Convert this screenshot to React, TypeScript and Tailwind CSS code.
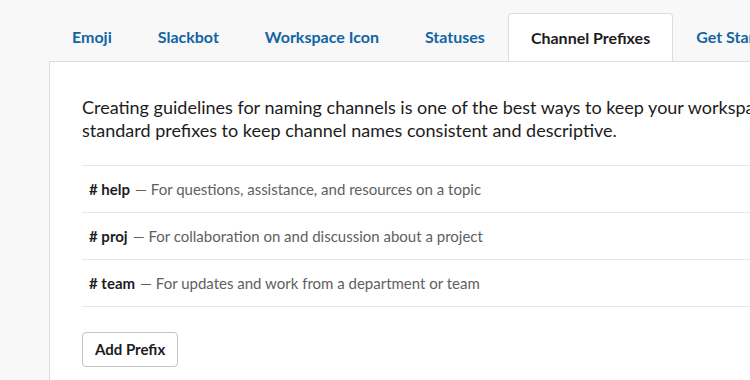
const tabs = ["Emoji", "Slackbot", "Workspace Icon", "Statuses", "Channel Prefixes", "Get Started"];

const prefixes = [
  { name: "help", desc: "For questions, assistance, and resources on a topic" },
  { name: "proj", desc: "For collaboration on and discussion about a project" },
  { name: "team", desc: "For updates and work from a department or team" },
];

const App = () => {
  const active = "Channel Prefixes";

  return (
    <div className="h-[380px] w-[750px] overflow-hidden bg-[#f8f8f8] pl-[49px] pt-[13px] font-['Lato','Liberation_Sans',sans-serif] text-[#1d1c1d]">
      <div className="w-[1100px]">
        {/* Tabs */}
        <div className="flex">
          {tabs.map((tab) =>
            tab === active ? (
              <div
                key={tab}
                className="relative z-10 -mb-px flex h-[48px] items-center rounded-t-[4px] border border-b-0 border-[#dddddd] bg-white px-[22px] text-[16px] font-bold text-[#1d1c1d]"
              >
                {tab}
              </div>
            ) : (
              <div
                key={tab}
                className="flex h-[48px] items-center border border-transparent px-[22px] text-[16px] font-bold text-[#1264a3]"
              >
                {tab}
              </div>
            )
          )}
        </div>

        {/* Panel */}
        <div className="border-l border-t border-[#dddddd] bg-white px-[32px] pt-[34px] pb-10">
          <p className="text-[18px] leading-[23px] text-[#1d1c1d]">
            Creating guidelines for naming channels is one of the best ways to keep your workspace organized. Here are some
            <br />
            standard prefixes to keep channel names consistent and descriptive.
          </p>

          <div className="mt-[23px] border-t border-[#e6e6e6]">
            {prefixes.map((p) => (
              <div
                key={p.name}
                className="flex h-[47px] items-center border-b border-[#e6e6e6] px-[7px] text-[15px]"
              >
                <span className="font-bold text-[#1d1c1d]"># {p.name}</span>
                <span className="ml-[5px] text-[#616061]">— {p.desc}</span>
              </div>
            ))}
          </div>

          <button className="mt-[25px] h-[35px] rounded-[4px] border border-[#c4c4c4] bg-white px-[12px] text-[15px] font-bold text-[#1d1c1d]">
            Add Prefix
          </button>
        </div>
      </div>
    </div>
  );
};

export default App;
